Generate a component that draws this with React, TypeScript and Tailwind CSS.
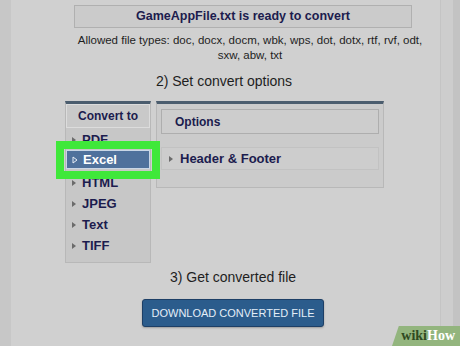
import React from 'react'

const navy = 'text-[#1c1c4e]'

function Arrow({ color = '#6b6b6b', outline = false }: { color?: string; outline?: boolean }) {
  return (
    <svg width="6" height="8" viewBox="0 0 6 8" aria-hidden="true" className="shrink-0">
      {outline ? (
        <path d="M1 1 L5 4 L1 7 Z" fill="none" stroke={color} strokeWidth="1" />
      ) : (
        <path d="M1 1 L5 4 L1 7 Z" fill={color} />
      )}
    </svg>
  )
}

function FormatItem({ label }: { label: string }) {
  return (
    <div className="flex h-[21px] items-center gap-[5px] pl-[5px]">
      <Arrow />
      <span className={`text-[13px] font-bold ${navy}`}>{label}</span>
    </div>
  )
}

export default function App() {
  return (
    <div className="relative flex h-[346px] w-[460px] overflow-hidden bg-[#c8c8c8] font-['Liberation_Sans',Arial,sans-serif]">
      <div className="w-[11px] shrink-0 bg-[#c7c7c7]" />

      <div className="flex w-[429px] shrink-0 flex-col bg-[#d0d0d0]">
        <div className="ml-[63px] mt-[5px] flex h-[23px] w-[338px] items-center justify-center border border-[#b0b0b0] bg-[#cbcbcb]">
          <span className={`text-[12.5px] font-bold ${navy}`}>GameAppFile.txt is ready to convert</span>
        </div>

        <p className="ml-[66px] mt-[5px] w-[346px] whitespace-nowrap text-center text-[11.5px] leading-[15px] text-[#1e1e1e]">
          Allowed file types: doc, docx, docm, wbk, wps, dot, dotx, rtf, rvf, odt,
          <br />
          sxw, abw, txt
        </p>

        <p className="ml-[113px] mt-[9px] w-[200px] text-center text-[14px] leading-[18px] text-[#1e1e1e]">
          2) Set convert options
        </p>

        <div className="ml-[54px] mt-[11px] flex items-start gap-[5px]">
          <div className="flex h-[162px] w-[86px] flex-col border-x border-b border-[#b8b8b8] border-t-[3px] border-t-[#4b5d6e] bg-[#c7c7c7]">
            <div className="flex h-[24px] items-center justify-center border border-[#dcdcdc] bg-[#c9c9c9]">
              <span className={`text-[12px] font-bold ${navy}`}>Convert to</span>
            </div>
            <div className="mt-[1px] flex flex-col">
              <FormatItem label="PDF" />
              <div className="mb-[3px] flex h-[19px] items-center gap-[5px] border border-[#c9d6e6] bg-[#4f719c] pl-[5px]">
                <Arrow color="#e8eef6" outline />
                <span className="text-[13px] font-bold text-white">Excel</span>
              </div>
              <FormatItem label="HTML" />
              <FormatItem label="JPEG" />
              <FormatItem label="Text" />
              <FormatItem label="TIFF" />
            </div>
          </div>

          <div className="flex h-[87px] w-[228px] flex-col border-x border-b border-[#b8b8b8] border-t-[3px] border-t-[#4b5d6e] bg-[#cbcbcb] px-[4px]">
            <div className="mt-[5px] flex h-[25px] items-center border border-[#aeaeae] bg-[#cdcdcd] pl-[13px]">
              <span className={`text-[12px] font-bold ${navy}`}>Options</span>
            </div>
            <div className="mt-[13px] flex h-[23px] items-center gap-[6px] border border-[#c2c2c2] bg-[#cdcdcd] pl-[6px]">
              <Arrow />
              <span className={`text-[13px] font-bold ${navy}`}>Header &amp; Footer</span>
            </div>
          </div>
        </div>

        <p className="ml-[122px] mt-[5px] w-[200px] text-center text-[14px] leading-[18px] text-[#1e1e1e]">
          3) Get converted file
        </p>

        <button className="ml-[131px] mt-[13px] flex h-[28px] w-[182px] items-center justify-center rounded-[3px] border border-[#1d3f66] bg-[#2b5c8c] text-[11px] text-[#e4eef8] shadow-[0_1px_2px_rgba(0,0,0,0.25)]">
          DOWNLOAD CONVERTED FILE
        </button>
      </div>

      <div className="w-[13px] shrink-0 border-l border-[#c4c4c4] bg-[#cdcdcd]" />
      <div className="flex-1 bg-[#c3c3c3]" />

      <div className="pointer-events-none absolute left-[56px] top-[141px] h-[38px] w-[104px] border-[8px] border-[#3fe83a]" />

      <div className="absolute bottom-0 right-0 flex h-[20px] w-[68px] items-center justify-end bg-[#93b57e] pr-[5px] [clip-path:polygon(10%_0,100%_0,100%_100%,0_100%)]">
        <span className="font-['Liberation_Serif',serif] text-[14px] font-bold leading-none text-[#2f4a22]">wiki</span>
        <span className="font-['Liberation_Serif',serif] text-[14px] font-bold leading-none text-white">How</span>
      </div>
    </div>
  )
}
